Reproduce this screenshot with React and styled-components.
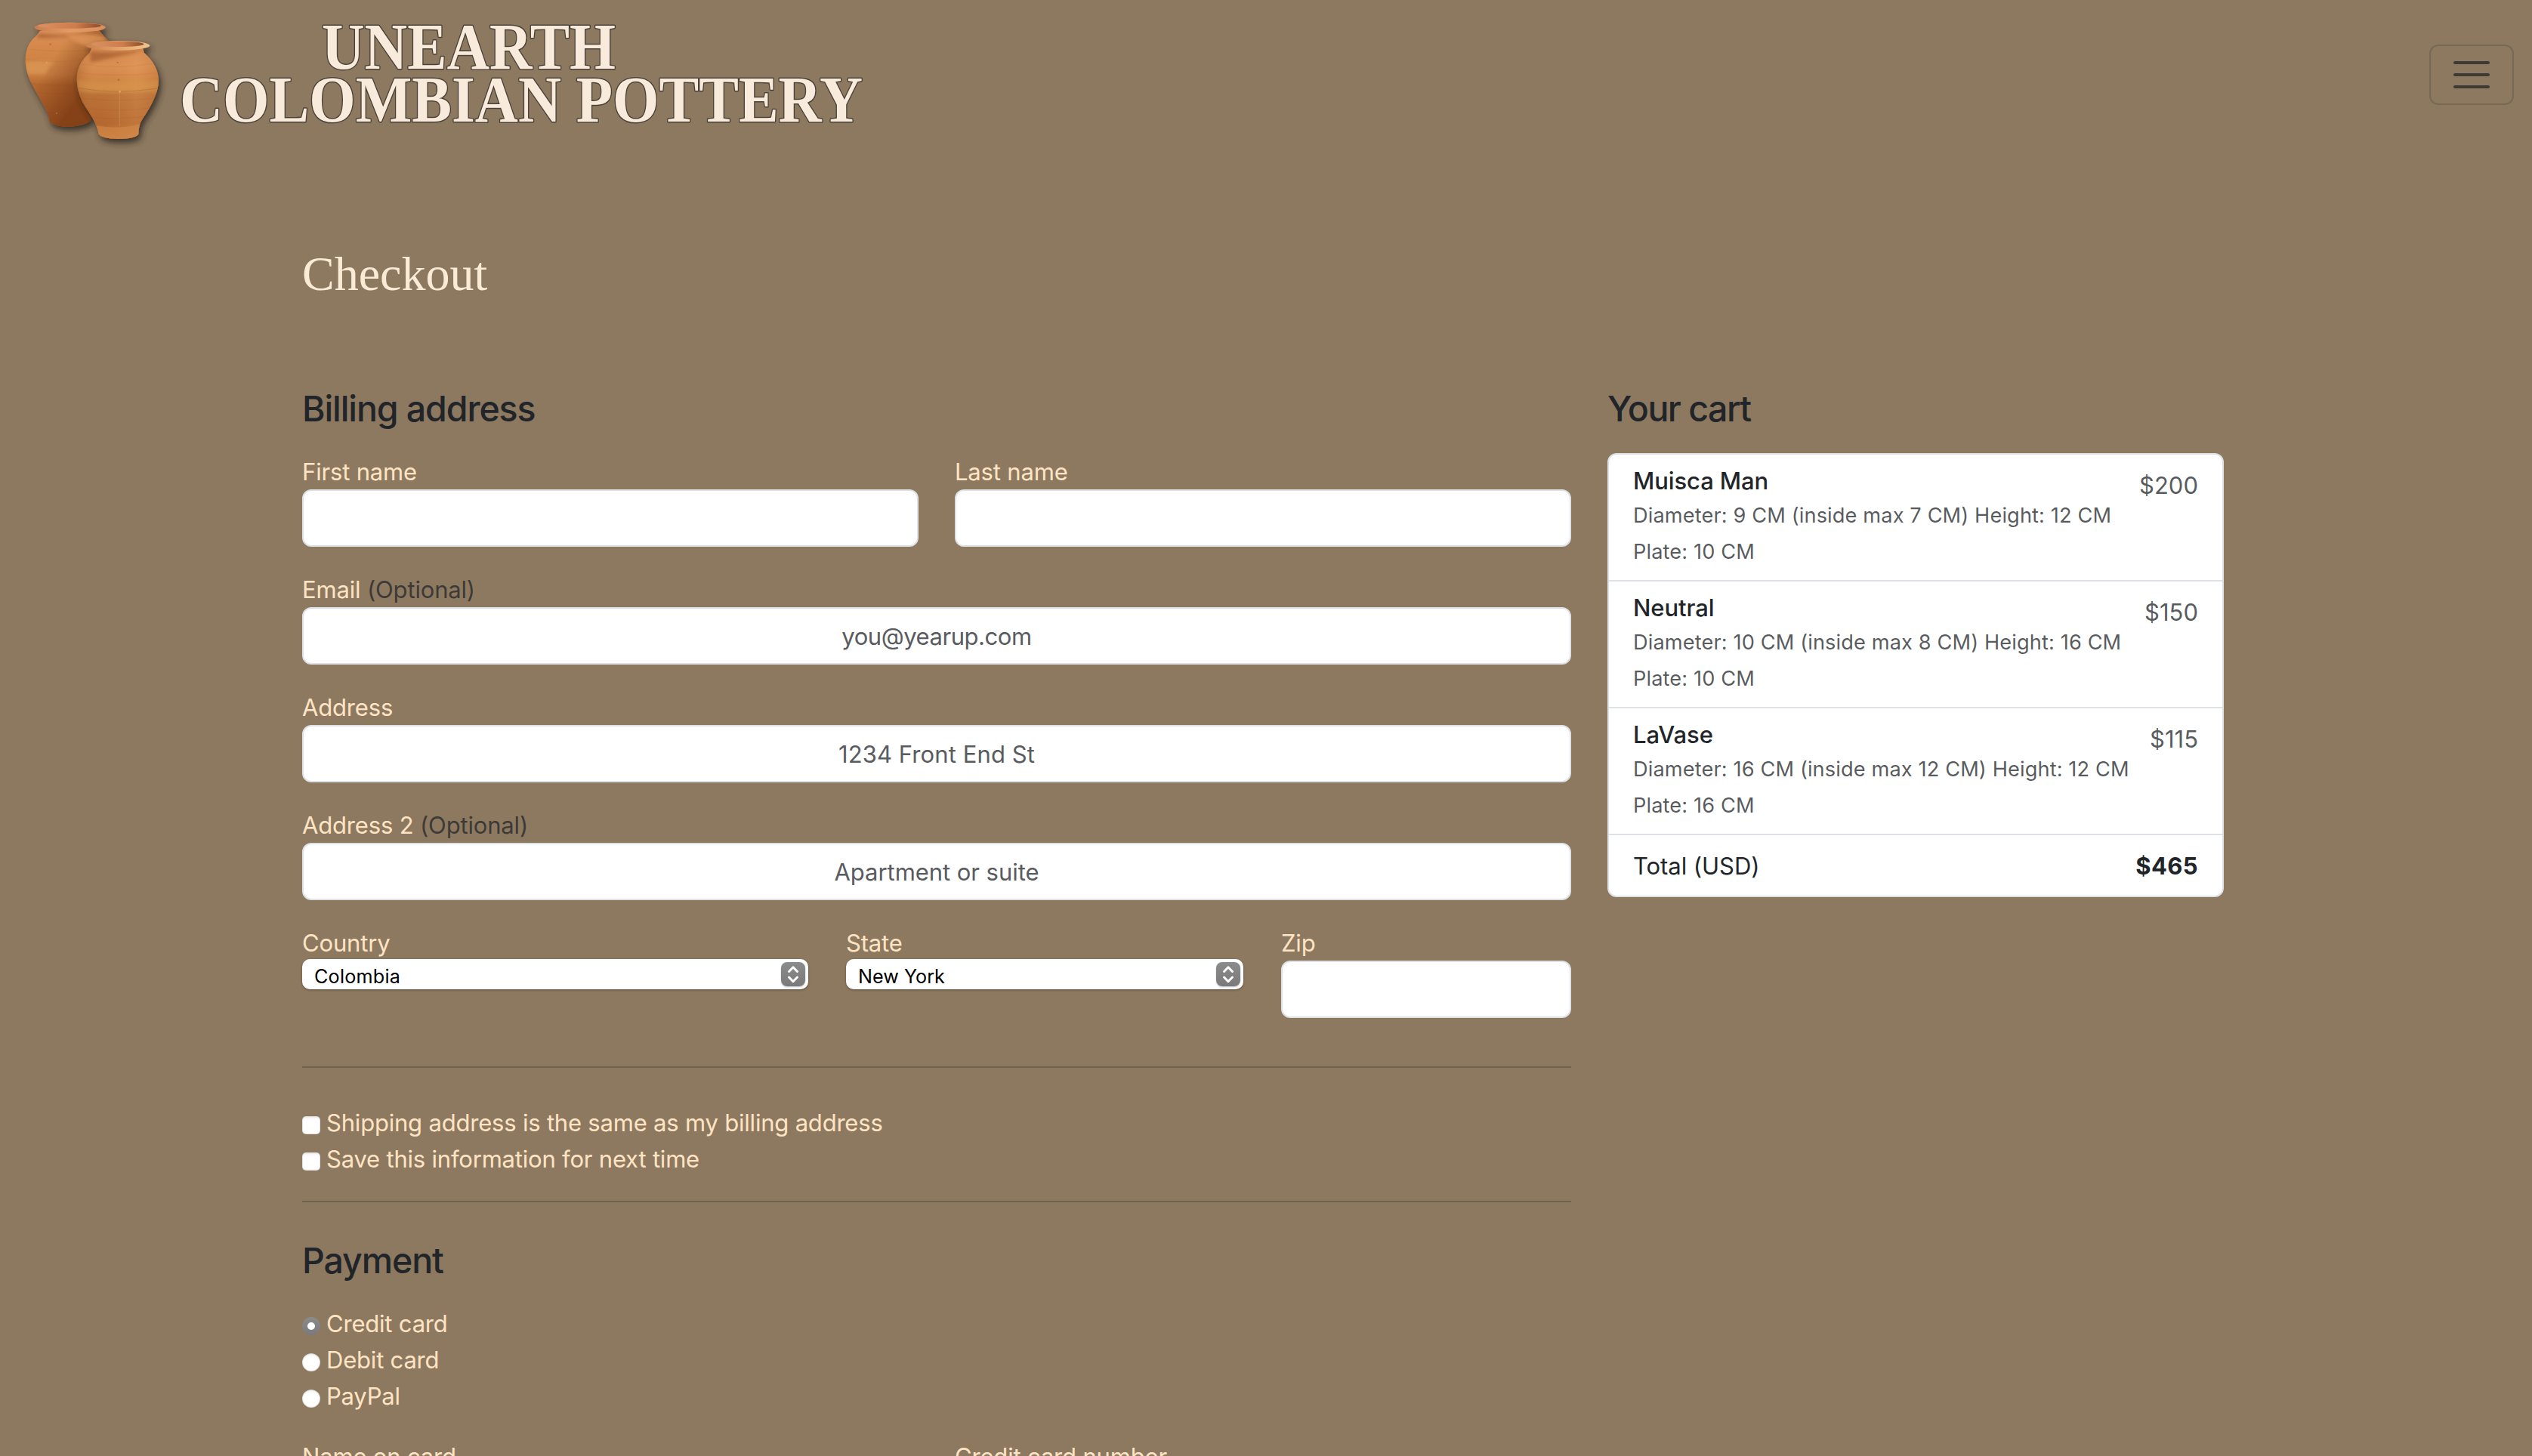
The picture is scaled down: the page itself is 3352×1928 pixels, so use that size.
import React from "react";
import styled, { createGlobalStyle, css } from "styled-components";

const Global = createGlobalStyle`
  * { box-sizing: border-box; }
  body { margin: 0; background: #8d7960; }
`;

const Page = styled.div`
  height: 1928px;
  overflow: hidden;
  background: #8d7960;
  color: #212529;
  font: 400 31px/48px Inter, "Liberation Sans", sans-serif;
  letter-spacing: -0.17px;
`;

const Header = styled.header`
  display: flex;
  align-items: center;
  justify-content: space-between;
  height: 198px;
  padding-right: 24px;
`;

const LogoArt = styled.svg`
  display: block;
  flex: none;
  width: 1160px;
  height: 198px;
`;

const Wordmark = styled.text`
  font: 700 87px "Liberation Serif", serif;
  letter-spacing: 0;
  fill: #f8ebdb;
  stroke: #4a4238;
  stroke-width: 3px;
  stroke-linejoin: round;
  paint-order: stroke;
`;

const Toggler = styled.button`
  display: flex;
  flex-direction: column;
  align-items: center;
  justify-content: center;
  gap: 12px;
  width: 112px;
  height: 80px;
  padding: 0;
  background: transparent;
  border: 2px solid rgba(33, 37, 41, 0.19);
  border-radius: 12px;
`;

const Bar = styled.span`
  width: 48px;
  height: 4px;
  border-radius: 2px;
  background: #3c3a37;
`;

const Container = styled.main`
  width: 2544px;
  margin: 126px 0 0 400px;
`;

const Title = styled.h2`
  margin: 0 0 111px;
  font: 400 64px/77px "Liberation Serif", serif;
  letter-spacing: 0;
  color: #faebd7;
`;

const Columns = styled.div`
  display: grid;
  grid-template-columns: 1680px 816px;
  align-items: start;
  gap: 48px;
`;

const Heading = styled.h4`
  margin: 0 0 30px;
  font-size: 46.5px;
  font-weight: 500;
  line-height: 58px;
  letter-spacing: ${(p) => p.$track || -1.1}px;
`;

const Fields = styled.div`
  display: grid;
  grid-template-columns: ${(p) => p.$cols || "1fr"};
  gap: 32px 48px;
  margin-bottom: 32px;
`;

const Label = styled.label`
  display: block;
  height: 48px;
  padding-top: 0.6px;
  color: #ffe4c4;
`;

const Muted = styled.span`
  color: rgba(33, 37, 41, 0.75);
`;

const Input = styled.input`
  display: block;
  width: 100%;
  height: 76px;
  padding: 12px 24px;
  font: inherit;
  letter-spacing: ${(p) => p.$track || 0}px;
  text-align: center;
  background: #fff;
  border: 2px solid #dee2e6;
  border-radius: 12px;
  &::placeholder { color: #595c5f; opacity: 1; }
`;

const Select = styled.div`
  display: flex;
  justify-content: space-between;
  width: calc(100% - 2px);
  height: 40px;
  margin-top: -2px;
  padding: 4px 4px 0 16px;
  background: #fff;
  border-radius: 10px;
  box-shadow: 0 1px 3px rgba(0, 0, 0, 0.35);
  color: #000;
`;

const Choice = styled.span`
  padding-top: 2px;
  font-size: 25.2px;
  line-height: 35px;
  letter-spacing: ${(p) => p.$track}px;
`;

const Stepper = styled.svg`
  width: 32px;
  height: 32px;
  border-radius: 8px;
  background: linear-gradient(#8b8b8b, #7a7a7a);
  box-shadow: 0 1px 2px rgba(0, 0, 0, 0.25);
`;

const Rule = styled.hr`
  height: 2px;
  margin: ${(p) => p.$m};
  border: 0;
  background: rgba(33, 37, 41, 0.25);
`;

const Options = styled.div`
  display: grid;
  grid-auto-rows: 48px;
  margin-bottom: 32px;
`;

const Option = styled.label`
  display: flex;
  gap: 8px;
  color: #ffe4c4;
`;

const OptionText = styled.span`
  padding-top: 0.6px;
  letter-spacing: -0.2px;
`;

const box = css`
  display: grid;
  place-items: center;
  width: 24px;
  height: 24px;
  margin-top: 16px;
  background: linear-gradient(#f1f1f1, #fff 25%);
  box-shadow: inset 0 0 2px rgba(0, 0, 0, 0.4);
`;

const Check = styled.span`
  ${box}
  border-radius: 5px;
`;

const Radio = styled.span`
  ${box}
  border-radius: 50%;
  ${(p) => p.$on && css`
    background: linear-gradient(#8b8b8b, #7a7a7a);
    box-shadow: none;
    &::after {
      content: "";
      width: 10px;
      height: 10px;
      border-radius: 50%;
      background: #fff;
    }
  `}
`;

const Cart = styled.ul`
  margin: 0;
  padding: 0;
  list-style: none;
  background: #fff;
  border: 2px solid #dee2e6;
  border-radius: 12px;
`;

const Item = styled.li`
  display: flex;
  justify-content: space-between;
  height: 168px;
  padding: 16px 32px 0;
  border-bottom: 2px solid #dee2e6;
`;

const Name = styled.h6`
  margin: 0;
  font-size: 31px;
  font-weight: 500;
  line-height: 38px;
  letter-spacing: -0.1px;
`;

const Details = styled.div`
  margin-top: 3px;
  font-size: 27.2px;
  line-height: 48px;
  letter-spacing: 0.12px;
  color: rgba(33, 37, 41, 0.75);
  white-space: nowrap;
`;

const Price = styled.span`
  padding-top: 1px;
  color: rgba(33, 37, 41, 0.75);
  letter-spacing: 0;
`;

const Total = styled.li`
  display: flex;
  justify-content: space-between;
  height: 80px;
  padding: 17px 32px 0;
  letter-spacing: -0.05px;
`;

const Sum = styled.strong`
  font-weight: 700;
  letter-spacing: 0.4px;
`;

function Logo() {
  return (
    <LogoArt viewBox="0 0 1160 198">
      <defs>
        <linearGradient id="body" x1="0" y1="0" x2="0" y2="1">
          <stop offset="0" stopColor="#d4864c" />
          <stop offset=".2" stopColor="#d98f52" />
          <stop offset=".34" stopColor="#d18646" />
          <stop offset=".47" stopColor="#cd8745" />
          <stop offset=".52" stopColor="#ba7137" />
          <stop offset=".82" stopColor="#b3672f" />
          <stop offset="1" stopColor="#c27638" />
        </linearGradient>
        <linearGradient id="back" x1="0" y1="0" x2="0" y2="1">
          <stop offset="0" stopColor="#dc9058" />
          <stop offset=".25" stopColor="#d18646" />
          <stop offset=".45" stopColor="#c97e42" />
          <stop offset=".56" stopColor="#b4672f" />
          <stop offset="1" stopColor="#aa5d2b" />
        </linearGradient>
        <linearGradient id="shade" x1="0" y1="0" x2="1" y2="0">
          <stop offset="0" stopColor="#8a431a" stopOpacity=".35" />
          <stop offset=".22" stopColor="#c87b3c" stopOpacity="0" />
          <stop offset=".72" stopColor="#f3ac68" stopOpacity=".22" />
          <stop offset="1" stopColor="#b56c34" stopOpacity=".3" />
        </linearGradient>
        <linearGradient id="dark" x1=".1" y1=".15" x2=".85" y2=".7">
          <stop offset=".3" stopColor="#7a3814" stopOpacity="0" />
          <stop offset=".8" stopColor="#74350f" stopOpacity=".7" />
        </linearGradient>
        <linearGradient id="lip" x1="0" y1="0" x2="1" y2="0">
          <stop offset="0" stopColor="#cb7d50" />
          <stop offset=".5" stopColor="#e39b64" />
          <stop offset="1" stopColor="#d98f5a" />
        </linearGradient>
        <linearGradient id="lipLight" x1="0" y1="0" x2="1" y2="0">
          <stop offset="0" stopColor="#c98149" />
          <stop offset=".5" stopColor="#e2a269" />
          <stop offset="1" stopColor="#efc48c" />
        </linearGradient>
        <linearGradient id="mouth" x1="0" y1="0" x2="1" y2="0">
          <stop offset="0" stopColor="#dc9060" />
          <stop offset=".6" stopColor="#cd7c4e" />
          <stop offset="1" stopColor="#8f4a2a" />
        </linearGradient>
        <filter id="soft" x="-20%" y="-20%" width="150%" height="150%">
          <feDropShadow dx="9" dy="15" stdDeviation="13" floodColor="#2a251c" floodOpacity=".85" />
        </filter>
        <filter id="blur" x="-20%" y="-80%" width="140%" height="260%">
          <feGaussianBlur stdDeviation="6" />
        </filter>
        <clipPath id="backClip">
          <path d="M98 78 Q92 92 70 110 Q38 145 41 205 Q45 255 72 300 L122 390 Q134 412 138 440 Q160 458 215 458 Q275 456 300 436 L330 300 L372 118 Q350 98 336 78 Z" />
        </clipPath>
        <clipPath id="frontClip">
          <path d="M302 146 Q302 162 284 176 Q244 214 245 275 Q248 335 282 385 Q326 448 331 486 Q340 506 410 507 Q480 505 490 488 Q490 452 506 428 Q570 335 570 275 Q568 212 512 164 L508 146 Z" />
        </clipPath>
      </defs>
      <g transform="translate(20 15) scale(.33333)">
        <g filter="url(#soft)">
          <g clipPath="url(#backClip)">
            <rect x="30" y="70" width="350" height="400" fill="url(#back)" />
            <rect x="30" y="70" width="350" height="400" fill="url(#dark)" />
            <path d="M96 88 Q200 104 345 80 L300 94 Q190 106 84 106 Z" fill="#98512a" opacity=".6" filter="url(#blur)" />
            <path d="M200 92 Q290 84 350 100 L372 118 L290 140 Q230 120 200 92 Z" fill="#e39a5c" opacity=".7" filter="url(#blur)" />
            <path d="M38 205 Q90 192 160 200 Q130 220 122 248 L48 250 Z" fill="#e0a05c" opacity=".55" filter="url(#blur)" />
            <g stroke="#8a4a20" strokeWidth="2" opacity=".14" fill="none">
              <path d="M50 150 Q200 168 330 150M42 190 Q180 210 280 190M52 285 Q160 300 260 290M70 320 Q170 334 270 322M100 375 Q200 390 300 374M116 400 Q200 414 300 400" />
            </g>
          </g>
          <ellipse cx="218" cy="64" rx="141" ry="20" fill="url(#lip)" />
          <ellipse cx="216" cy="57" rx="126" ry="11" fill="url(#mouth)" />
        </g>
        <g filter="url(#soft)">
          <g clipPath="url(#frontClip)">
            <rect x="240" y="140" width="335" height="370" fill="url(#body)" />
            <rect x="240" y="140" width="335" height="370" fill="url(#shade)" />
            <path d="M298 158 Q400 170 515 150 L470 166 Q400 180 300 204 Z" fill="#a35b2d" opacity=".7" filter="url(#blur)" />
            <path d="M246 272 Q400 292 570 274 L566 306 Q400 330 250 306 Z" fill="#d9984e" opacity=".4" filter="url(#blur)" />
            <path d="M248 304 Q400 332 566 306" fill="none" stroke="#99663c" strokeWidth="3" opacity=".45" />
            <path d="M322 454 Q410 470 496 448 L492 515 H328 Z" fill="#d58c4a" opacity=".55" />
            <g stroke="#8a4a20" strokeWidth="2" opacity=".15" fill="none">
              <path d="M262 210 Q400 230 548 208M250 245 Q400 262 566 245M256 345 Q400 362 555 345M280 385 Q400 400 530 385M300 420 Q400 432 510 418" />
            </g>
            <path d="M415 320 V455" stroke="#d9a060" strokeWidth="4" opacity=".3" />
          </g>
          <ellipse cx="408" cy="136" rx="127" ry="19" fill="url(#lipLight)" />
          <ellipse cx="408" cy="130" rx="104" ry="11" fill="url(#mouth)" />
        </g>
        <g fill="#e0aa58">
          <circle cx="416" cy="319" r="4" />
          <circle cx="411" cy="272" r="4" fill="#b8702f" />
          <circle cx="407" cy="203" r="3" fill="#b06a35" />
          <circle cx="140" cy="131" r="4" fill="#b87538" />
          <circle cx="126" cy="203" r="3" />
          <circle cx="165" cy="405" r="3" fill="#b87038" />
        </g>
      </g>
      <Wordmark x="426" y="91" textLength="389" lengthAdjust="spacingAndGlyphs">UNEARTH</Wordmark>
      <Wordmark x="238" y="161" textLength="904" lengthAdjust="spacingAndGlyphs">COLOMBIAN POTTERY</Wordmark>
    </LogoArt>
  );
}

function Field({ label, optional, placeholder, track }) {
  return (
    <div>
      <Label>{label}{optional && <Muted> (Optional)</Muted>}</Label>
      <Input placeholder={placeholder} $track={track} />
    </div>
  );
}

function SelectField({ label, value, track }) {
  return (
    <div>
      <Label>{label}</Label>
      <Select>
        <Choice $track={track}>{value}</Choice>
        <Stepper viewBox="0 0 32 32" fill="none" stroke="#fff" strokeWidth="3" strokeLinecap="round" strokeLinejoin="round">
          <path d="M10.5 12.5 L16 6.8 L21.5 12.5M10.5 20 L16 25.7 L21.5 20" />
        </Stepper>
      </Select>
    </div>
  );
}

const items = [
  ["Muisca Man", "Diameter: 9 CM (inside max 7 CM) Height: 12 CM", "Plate: 10 CM", "$200"],
  ["Neutral", "Diameter: 10 CM (inside max 8 CM) Height: 16 CM", "Plate: 10 CM", "$150"],
  ["LaVase", "Diameter: 16 CM (inside max 12 CM) Height: 12 CM", "Plate: 16 CM", "$115"],
];

const preferences = ["Shipping address is the same as my billing address", "Save this information for next time"];
const methods = ["Credit card", "Debit card", "PayPal"];

export default function App() {
  return (
    <Page>
      <Global />
      <Header>
        <Logo />
        <Toggler aria-label="Toggle navigation"><Bar /><Bar /><Bar /></Toggler>
      </Header>
      <Container>
        <Title>Checkout</Title>
        <Columns>
          <form>
            <Heading>Billing address</Heading>
            <Fields $cols="1fr 1fr">
              <Field label="First name" />
              <Field label="Last name" />
            </Fields>
            <Fields>
              <Field label="Email" optional placeholder="you@yearup.com" track={-0.45} />
              <Field label="Address" placeholder="1234 Front End St" track={0.1} />
              <Field label="Address 2" optional placeholder="Apartment or suite" track={-0.05} />
            </Fields>
            <Fields $cols="672px 528px 384px">
              <SelectField label="Country" value="Colombia" track={0.2} />
              <SelectField label="State" value="New York" track={0} />
              <Field label="Zip" />
            </Fields>
            <Rule $m="64px 0 48px" />
            <Options>
              {preferences.map((text) => (
                <Option key={text}><Check /><OptionText>{text}</OptionText></Option>
              ))}
            </Options>
            <Rule $m="0 0 48px" />
            <Heading>Payment</Heading>
            <Options>
              {methods.map((text, i) => (
                <Option key={text}><Radio $on={i === 0} /><OptionText>{text}</OptionText></Option>
              ))}
            </Options>
            <Fields $cols="1fr 1fr">
              <Field label="Name on card" />
              <Field label="Credit card number" />
            </Fields>
          </form>
          <aside>
            <Heading $track={-1.5}>Your cart</Heading>
            <Cart>
              {items.map(([name, size, plate, price]) => (
                <Item key={name}>
                  <div>
                    <Name>{name}</Name>
                    <Details>{size}<br />{plate}</Details>
                  </div>
                  <Price>{price}</Price>
                </Item>
              ))}
              <Total><span>Total (USD)</span><Sum>$465</Sum></Total>
            </Cart>
          </aside>
        </Columns>
      </Container>
    </Page>
  );
}
